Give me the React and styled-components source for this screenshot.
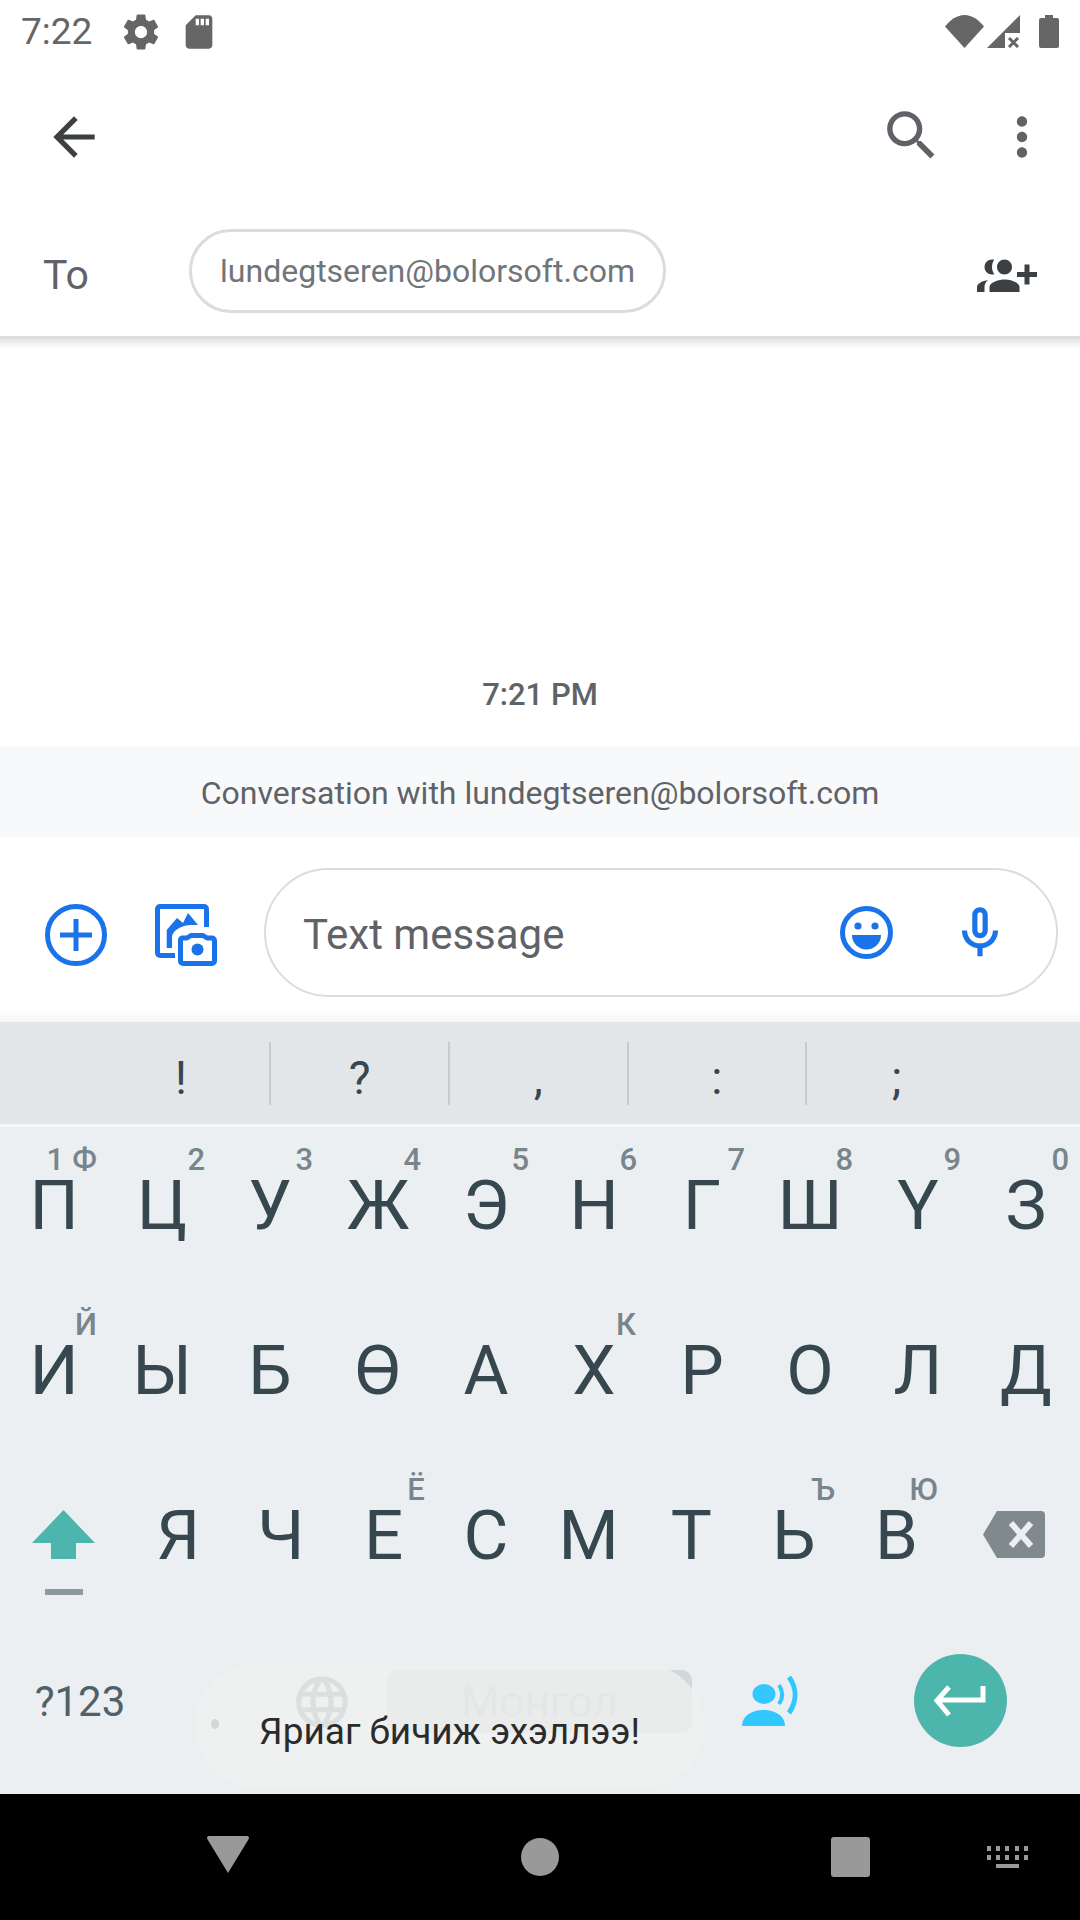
import React from 'react';
import styled, { createGlobalStyle } from 'styled-components';

const GlobalStyle = createGlobalStyle`
  html, body {
    margin: 0;
    padding: 0;
    background: #fff;
  }
  * { box-sizing: border-box; }
`;

const Screen = styled.div`
  position: relative;
  width: 1080px;
  height: 1920px;
  overflow: hidden;
  display: flex;
  flex-direction: column;
  background: #fff;
  font-family: Roboto, "Noto Sans", sans-serif;
`;

// Status bar
const StatusBar = styled.div`
  height: 63px;
  padding: 0 21px;
  display: flex;
  align-items: center;
  justify-content: space-between;
  color: #666;
`;

const StatusGroup = styled.div`
  display: flex;
  align-items: center;
  gap: ${props => props.$gap || 0}px;
`;

const Clock = styled.span`
  font-size: 37px;
  width: 99px;
  color: #666;
`;

const Glyph = styled.svg`
  display: block;
  flex: none;
  fill: ${props => props.$color || 'currentColor'};
`;

const SdGlyph = styled(Glyph)`
  margin-left: 17px;
`;

const BatteryGlyph = styled(Glyph)`
  margin-left: 16px;
`;

// Toolbar
const Toolbar = styled.div`
  height: 147px;
  padding: 0 27px 0 43px;
  display: flex;
  align-items: center;
  justify-content: space-between;
`;

const ToolbarActions = styled.div`
  display: flex;
  align-items: center;
  gap: 47px;
`;

const SearchGlyph = styled(Glyph)`
  margin-top: -3px;
`;

const RecipientRow = styled.div`
  height: 126px;
  padding: 19px 43px 0;
  display: flex;
  align-items: flex-start;
`;

const ToLabel = styled.span`
  width: 146px;
  margin-top: 22px;
  font-size: 41px;
  color: #5f6368;
`;

const Chip = styled.div`
  width: 477px;
  height: 84px;
  border: 3px solid #dadce0;
  border-radius: 42px;
  display: flex;
  align-items: center;
  justify-content: center;
  font-size: 32px;
  color: #70757a;
`;

const AddPeople = styled(Glyph)`
  margin-left: auto;
  margin-top: 18px;
  transform: scaleX(-1);
`;

const Divider = styled.div`
  height: 12px;
  background: linear-gradient(#dcdde0 0 3px, #e4e5e7 3px, #fff 100%);
`;

// Conversation
const Thread = styled.div`
  flex: 1;
  display: flex;
  flex-direction: column;
  justify-content: flex-end;
`;

const Timestamp = styled.div`
  height: 55px;
  margin-bottom: 15px;
  text-align: center;
  font-size: 31px;
  font-weight: 500;
  color: #5f6368;
`;

const Banner = styled.div`
  height: 91px;
  padding-top: 2px;
  background: #f8f9fa;
  display: flex;
  align-items: center;
  justify-content: center;
  font-size: 32px;
  color: #5f6368;
`;

// Compose
const Compose = styled.div`
  height: 185px;
  padding: 31px 22px 0 45px;
  display: flex;
  align-items: flex-start;
  background: linear-gradient(#fff 173px, #f4f5f6 100%);
`;

const ComposeIcon = styled(Glyph)`
  margin-top: 36px;
  margin-right: ${props => props.$gap}px;
`;

const MessageField = styled.div`
  flex: 1;
  height: 129px;
  padding: 0 45px 0 37px;
  border: 2px solid #dadce0;
  border-radius: 65px;
  display: flex;
  align-items: center;
  font-size: 42px;
  color: #5f6368;
`;

const Placeholder = styled.span`
  flex: 1;
  margin-top: 3px;
`;

const FieldIcons = styled.div`
  display: flex;
  align-items: center;
  gap: 56px;
`;

// Keyboard
const SuggestionStrip = styled.div`
  height: 102px;
  padding: 0 92.6px;
  background: #e2e6e9;
  display: grid;
  grid-template-columns: repeat(5, 178.67px);
  align-items: center;
`;

const Suggestion = styled.div`
  height: 63px;
  padding-top: 10px;
  display: flex;
  align-items: center;
  justify-content: center;
  font-size: 46px;
  color: #37474f;
  border-right: ${props => (props.$last ? 'none' : '2px solid #c6cbcf')};
`;

const Keyboard = styled.div`
  margin-top: 3px;
  height: 667px;
  background: #eceff1;
  box-shadow: 0 -3px 0 #f6f7f8;
`;

const KeyRow = styled.div`
  height: 165px;
  display: grid;
  grid-template-columns: ${props => props.$columns};
`;

const Key = styled.div`
  position: relative;
  padding-bottom: ${props => props.$bottom ?? 9}px;
  display: flex;
  align-items: center;
  justify-content: center;
  font-size: 69px;
  line-height: 1;
  color: #37474f;
`;

const Hint = styled.span`
  position: absolute;
  top: ${props => props.$top || 17}px;
  right: ${props => props.$right || 11}px;
  font-size: 31px;
  font-weight: 500;
  line-height: 1;
  color: #78858c;
`;

const ShiftBar = styled.span`
  position: absolute;
  left: 45px;
  top: 132px;
  width: 38px;
  height: 6px;
  background: #8d979e;
`;

const ModeLabel = styled.span`
  font-size: 42px;
  color: #4f616b;
`;

const PeriodDot = styled.span`
  width: 8px;
  height: 10px;
  margin-top: 44px;
  border-radius: 50%;
  background: #4a5a62;
`;

const SpaceCell = styled.div`
  display: flex;
  justify-content: flex-end;
  align-items: center;
  padding-bottom: 6px;
`;

const SpaceBar = styled.div`
  width: 305px;
  height: 63px;
  border-radius: 10px;
  background: #cfd8dc;
  display: flex;
  align-items: center;
  justify-content: center;
  font-size: 44px;
  color: #b3bbbf;
`;

const EnterButton = styled.div`
  width: 93px;
  height: 93px;
  margin-left: -9px;
  margin-top: -3px;
  padding-right: 3px;
  border-radius: 50%;
  background: #4db6ac;
  display: flex;
  align-items: center;
  justify-content: center;
`;

const Toast = styled.div`
  position: absolute;
  left: 195px;
  top: 1663px;
  width: 509px;
  height: 126px;
  border-radius: 63px;
  background: rgba(239, 239, 239, 0.83);
  padding-top: 47px;
  text-align: center;
  font-size: 37px;
  color: #2b2b2b;
`;

// Nav bar
const NavBar = styled.div`
  height: 126px;
  background: #000;
  display: grid;
  grid-template-columns: 249px 291px 311px 156px 1fr;
  align-items: center;
`;

const NavSlot = styled.div`
  display: flex;
  justify-content: flex-end;
  transform: translateX(${props => props.$shift || 0}px);
`;

const BackGlyph = styled(Glyph)`
  margin-top: -6px;
`;

const NavCircle = styled.div`
  width: 38px;
  height: 38px;
  border-radius: 50%;
  background: #999;
`;

const NavSquare = styled.div`
  width: 39px;
  height: 40px;
  border-radius: 3px;
  background: #999;
`;

const rows = [
  [
    { l: 'П', hints: [{ t: 'Ф' }, { t: '1', right: 44 }] },
    { l: 'Ц', hints: [{ t: '2' }] },
    { l: 'У', hints: [{ t: '3' }] },
    { l: 'Ж', hints: [{ t: '4' }] },
    { l: 'Э', hints: [{ t: '5' }] },
    { l: 'Н', hints: [{ t: '6' }] },
    { l: 'Г', hints: [{ t: '7' }] },
    { l: 'Ш', hints: [{ t: '8' }] },
    { l: 'Ү', hints: [{ t: '9' }] },
    { l: 'З', hints: [{ t: '0' }] },
  ],
  [
    { l: 'И', hints: [{ t: 'Й' }] },
    { l: 'Ы' },
    { l: 'Б' },
    { l: 'Ө' },
    { l: 'А' },
    { l: 'Х', hints: [{ t: 'К', right: 12 }] },
    { l: 'Р' },
    { l: 'О' },
    { l: 'Л' },
    { l: 'Д' },
  ],
];

const thirdRow = [
  { l: 'Я' },
  { l: 'Ч' },
  { l: 'Е', hints: [{ t: 'Ё', right: 10 }] },
  { l: 'С' },
  { l: 'М' },
  { l: 'Т' },
  { l: 'Ь', hints: [{ t: 'Ъ', right: 10 }] },
  { l: 'В', hints: [{ t: 'Ю', right: 10 }] },
];

const renderKey = key => (
  <Key key={key.l}>
    {key.l}
    {key.hints && key.hints.map(h => (
      <Hint key={h.t} $right={h.right}>{h.t}</Hint>
    ))}
  </Key>
);

export default function App() {
  return (
    <Screen>
      <GlobalStyle />
      <StatusBar>
        <StatusGroup>
          <Clock>7:22</Clock>
          <Glyph width="42" height="42" viewBox="0 0 24 24">
            <path d="M19.43 12.98c.04-.32.07-.64.07-.98s-.03-.66-.07-.98l2.11-1.65c.19-.15.24-.42.12-.64l-2-3.46c-.12-.22-.39-.3-.61-.22l-2.49 1c-.52-.4-1.08-.73-1.69-.98l-.38-2.65C14.46 2.18 14.25 2 14 2h-4c-.25 0-.46.18-.49.42l-.38 2.65c-.61.25-1.17.59-1.69.98l-2.49-1c-.23-.09-.49 0-.61.22l-2 3.46c-.13.22-.07.49.12.64l2.11 1.65c-.04.32-.07.65-.07.98s.03.66.07.98l-2.11 1.65c-.19.15-.24.42-.12.64l2 3.46c.12.22.39.3.61.22l2.49-1c.52.4 1.08.73 1.69.98l.38 2.65c.03.24.24.42.49.42h4c.25 0 .46-.18.49-.42l.38-2.65c.61-.25 1.17-.59 1.69-.98l2.49 1c.23.09.49 0 .61-.22l2-3.46c.12-.22.07-.49-.12-.64l-2.11-1.65zM12 15.5c-1.93 0-3.5-1.57-3.5-3.5s1.57-3.5 3.5-3.5 3.5 1.57 3.5 3.5-1.57 3.5-3.5 3.5z" />
          </Glyph>
          <SdGlyph width="40" height="40" viewBox="0 0 24 24">
            <path d="M18 2h-8L4.02 8 4 20c0 1.1.9 2 2 2h12c1.1 0 2-.9 2-2V4c0-1.1-.9-2-2-2zm-6 6h-2V4h2v4zm3 0h-2V4h2v4zm3 0h-2V4h2v4z" />
          </SdGlyph>
        </StatusGroup>
        <StatusGroup $gap={3}>
          <Glyph width="39" height="33" viewBox="0 0 39 33">
            <path d="M19.5 33 L0 11.5 C5 5 12 0 19.5 0 C27 0 34 5 39 11.5 Z" />
          </Glyph>
          <Glyph width="33" height="33" viewBox="0 0 33 33">
            <path d="M0 33 L33 0 V18 H18 V33 Z" />
            <path d="M22 23 L31 32 M31 23 L22 32" stroke="#666" strokeWidth="3" fill="none" />
          </Glyph>
          <BatteryGlyph width="20" height="33" viewBox="0 0 20 33">
            <path d="M6 0h8v3h4a2 2 0 0 1 2 2v26a2 2 0 0 1-2 2H2a2 2 0 0 1-2-2V5a2 2 0 0 1 2-2h4z" />
          </BatteryGlyph>
        </StatusGroup>
      </StatusBar>

      <Toolbar>
        <Glyph $color="#3c4043" width="62" height="62" viewBox="0 0 24 24">
          <path d="M20 11H7.83l5.59-5.59L12 4l-8 8 8 8 1.41-1.41L7.83 13H20v-2z" />
        </Glyph>
        <ToolbarActions>
          <SearchGlyph $color="#5f6368" width="65" height="65" viewBox="0 0 24 24">
            <path d="M15.5 14h-.79l-.28-.27C15.41 12.59 16 11.11 16 9.5 16 5.91 13.09 3 9.5 3S3 5.91 3 9.5 5.91 16 9.5 16c1.61 0 3.09-.59 4.23-1.57l.27.28v.79l5 4.99L20.49 19l-4.99-5zm-6 0C7.01 14 5 11.99 5 9.5S7.01 5 9.5 5 14 7.01 14 9.5 11.99 14 9.5 14z" />
          </SearchGlyph>
          <Glyph $color="#5f6368" width="62" height="62" viewBox="0 0 24 24">
            <path d="M12 8c1.1 0 2-.9 2-2s-.9-2-2-2-2 .9-2 2 .9 2 2 2zm0 2c-1.1 0-2 .9-2 2s.9 2 2 2 2-.9 2-2-.9-2-2-2zm0 6c-1.1 0-2 .9-2 2s.9 2 2 2 2-.9 2-2-.9-2-2-2z" />
          </Glyph>
        </ToolbarActions>
      </Toolbar>

      <RecipientRow>
        <ToLabel>To</ToLabel>
        <Chip>lundegtseren@bolorsoft.com</Chip>
        <AddPeople $color="#3c4043" width="60" height="60" viewBox="0 0 24 24">
          <path d="M8 10H5V7H3v3H0v2h3v3h2v-3h3v-2zm10 1c1.66 0 2.99-1.34 2.99-3S19.66 5 18 5c-.32 0-.63.05-.91.14.57.81.9 1.79.9 2.86s-.34 2.04-.9 2.86c.28.09.59.14.91.14zm-5 0c1.66 0 3-1.34 3-3s-1.34-3-3-3-3 1.34-3 3 1.34 3 3 3zm6.62 2.16c.83.73 1.38 1.66 1.38 2.84v2h3v-2c0-1.54-2.37-2.49-4.38-2.84zM13 13c-2 0-6 1-6 3v2h12v-2c0-2-4-3-6-3z" />
        </AddPeople>
      </RecipientRow>
      <Divider />

      <Thread>
        <Timestamp>7:21 PM</Timestamp>
        <Banner>Conversation with lundegtseren@bolorsoft.com</Banner>
      </Thread>

      <Compose>
        <ComposeIcon $gap={48} width="62" height="62" viewBox="0 0 62 62">
          <circle cx="31" cy="31" r="28.5" fill="none" stroke="#1a73e8" strokeWidth="5" />
          <path d="M31 15 V47 M15 31 H47" fill="none" stroke="#1a73e8" strokeWidth="5" />
        </ComposeIcon>
        <ComposeIcon $gap={47} width="62" height="62" viewBox="0 0 62 62">
          <path d="M20 51.5 H5 a2.5 2.5 0 0 1 -2.5 -2.5 V5 A2.5 2.5 0 0 1 5 2.5 H49 A2.5 2.5 0 0 1 51.5 5 V23" fill="none" stroke="#1a73e8" strokeWidth="5" />
          <path d="M11.7 26 L22 14 L28 19 L33 9 L43 21 H36 C28 21 19 25 17 32 V44 H11.7 Z" fill="#1a73e8" />
          <path d="M27 34 H32 L36 31.5 H48 L52 34 H57 A2.5 2.5 0 0 1 59.5 36.5 V57 A2.5 2.5 0 0 1 57 59.5 H28 A2.5 2.5 0 0 1 25.5 57 V36.5 A2.5 2.5 0 0 1 27 34 Z" fill="#fff" stroke="#1a73e8" strokeWidth="5" strokeLinejoin="round" />
          <circle cx="42.5" cy="45.5" r="6" fill="#1a73e8" />
        </ComposeIcon>
        <MessageField>
          <Placeholder>Text message</Placeholder>
          <FieldIcons>
            <Glyph width="53" height="53" viewBox="0 0 53 53">
              <circle cx="26.5" cy="26.5" r="24" fill="none" stroke="#1a73e8" strokeWidth="5" />
              <circle cx="18" cy="20" r="3.6" fill="#1a73e8" />
              <circle cx="35" cy="20" r="3.6" fill="#1a73e8" />
              <path d="M12 29 H41 A14.5 14.5 0 0 1 12 29 Z" fill="#1a73e8" />
            </Glyph>
            <Glyph $color="#1a73e8" width="62" height="62" viewBox="0 0 24 24">
              <path d="M12 14c1.66 0 3-1.34 3-3V5c0-1.66-1.34-3-3-3S9 3.34 9 5v6c0 1.66 1.34 3 3 3zm-1-9c0-.55.45-1 1-1s1 .45 1 1v6c0 .55-.45 1-1 1s-1-.45-1-1V5zm6 6c0 2.76-2.24 5-5 5s-5-2.24-5-5H5c0 3.53 2.61 6.43 6 6.92V21h2v-3.08c3.39-.49 6-3.39 6-6.92h-2z" />
            </Glyph>
          </FieldIcons>
        </MessageField>
      </Compose>

      <SuggestionStrip>
        {['!', '?', ',', ':', ';'].map((s, i) => (
          <Suggestion key={s} $last={i === 4}>{s}</Suggestion>
        ))}
      </SuggestionStrip>

      <Keyboard>
        {rows.map((row, i) => (
          <KeyRow key={i} $columns="repeat(10, 108px)">
            {row.map(renderKey)}
          </KeyRow>
        ))}
        <KeyRow $columns="127px repeat(8, 102.6px) 1fr">
          <Key $bottom={10}>
            <Glyph $color="#4db6ac" width="63" height="49" viewBox="0 0 63 49">
              <path d="M31.5 0 L63 33 H44 V49 H19 V33 H0 Z" />
            </Glyph>
            <ShiftBar />
          </Key>
          {thirdRow.map(renderKey)}
          <Key $bottom={10}>
            <Glyph width="62" height="47" viewBox="0 0 62 47">
              <path d="M14 0 H58 a4 4 0 0 1 4 4 V43 a4 4 0 0 1 -4 4 H14 L0 23.5 Z" fill="#80898d" />
              <path d="M28 12 L48 35 M48 12 L28 35" stroke="#eceff1" strokeWidth="6" fill="none" />
            </Glyph>
          </Key>
        </KeyRow>
        <KeyRow $columns="160px 110px 104px 318px 158px 1fr">
          <Key $bottom={6}><ModeLabel>?123</ModeLabel></Key>
          <Key $bottom={6}><PeriodDot /></Key>
          <Key $bottom={6}>
            <Glyph $color="#7f8c93" width="62" height="62" viewBox="0 0 24 24">
              <path d="M11.99 2C6.47 2 2 6.48 2 12s4.47 10 9.99 10C17.52 22 22 17.52 22 12S17.52 2 11.99 2zm6.93 6h-2.95c-.32-1.25-.78-2.45-1.38-3.56 1.84.63 3.37 1.91 4.33 3.56zM12 4.04c.83 1.2 1.48 2.53 1.91 3.96h-3.82c.43-1.43 1.08-2.76 1.91-3.96zM4.26 14C4.1 13.36 4 12.69 4 12s.1-1.36.26-2h3.38c-.08.66-.14 1.32-.14 2 0 .68.06 1.34.14 2H4.26zm.82 2h2.95c.32 1.25.78 2.45 1.38 3.56-1.84-.63-3.37-1.9-4.33-3.56zm2.95-8H5.08c.96-1.66 2.49-2.93 4.33-3.56C8.81 5.55 8.35 6.75 8.03 8zM12 19.96c-.83-1.2-1.48-2.53-1.91-3.96h3.82c-.43 1.43-1.08 2.76-1.91 3.96zM14.34 14H9.66c-.09-.66-.16-1.32-.16-2 0-.68.07-1.35.16-2h4.68c.09.65.16 1.32.16 2 0 .68-.07 1.34-.16 2zm.25 5.56c.6-1.11 1.06-2.31 1.38-3.56h2.95c-.96 1.65-2.49 2.93-4.33 3.56zM16.36 14c.08-.66.14-1.32.14-2 0-.68-.06-1.34-.14-2h3.38c.16.64.26 1.31.26 2s-.1 1.36-.26 2h-3.38z" />
            </Glyph>
          </Key>
          <SpaceCell>
            <SpaceBar>Монгол</SpaceBar>
          </SpaceCell>
          <Key $bottom={7}>
            <Glyph width="58" height="50" viewBox="0 0 58 50">
              <ellipse cx="22" cy="18" rx="11.5" ry="10" fill="#33c7ff" />
              <path d="M0 50 C0 40 10 34 21.5 34 S43 40 43 50 Z" fill="#33c7ff" />
              <path d="M37 9 C41 15 41 22 37 28" stroke="#33c7ff" strokeWidth="4" fill="none" />
              <path d="M47 1 C55 12 55 25 47 37" stroke="#33c7ff" strokeWidth="5" fill="none" />
            </Glyph>
          </Key>
          <Key $bottom={5}>
            <EnterButton>
              <Glyph width="54" height="32" viewBox="0 0 54 32">
                <path d="M51 1 V15 H6 M17 2 L5 15.5 L17 30" stroke="#fff" strokeWidth="5" fill="none" />
              </Glyph>
            </EnterButton>
          </Key>
        </KeyRow>
      </Keyboard>

      <Toast>Яриаг бичиж эхэллээ!</Toast>

      <NavBar>
        <NavSlot>
          <BackGlyph $color="#999" width="42" height="37" viewBox="0 0 42 37">
            <path d="M2 0 H40 a2 2 0 0 1 1.7 3 L21 37 L.3 3 A2 2 0 0 1 2 0 Z" />
          </BackGlyph>
        </NavSlot>
        <NavSlot $shift={19}>
          <NavCircle />
        </NavSlot>
        <NavSlot $shift={19}>
          <NavSquare />
        </NavSlot>
        <NavSlot $shift={21}>
          <Glyph $color="#999" width="41" height="22" viewBox="0 0 41 22">
            <path d="M0 0h4v5H0zM9 0h4v5H9zM18 0h4v5h-4zM28 0h4v5h-4zM37 0h4v5h-4zM0 9h4v5H0zM9 9h4v5H9zM18 9h4v5h-4zM28 9h4v5h-4zM37 9h4v5h-4zM9 18h23v4H9z" />
          </Glyph>
        </NavSlot>
      </NavBar>
    </Screen>
  );
}
